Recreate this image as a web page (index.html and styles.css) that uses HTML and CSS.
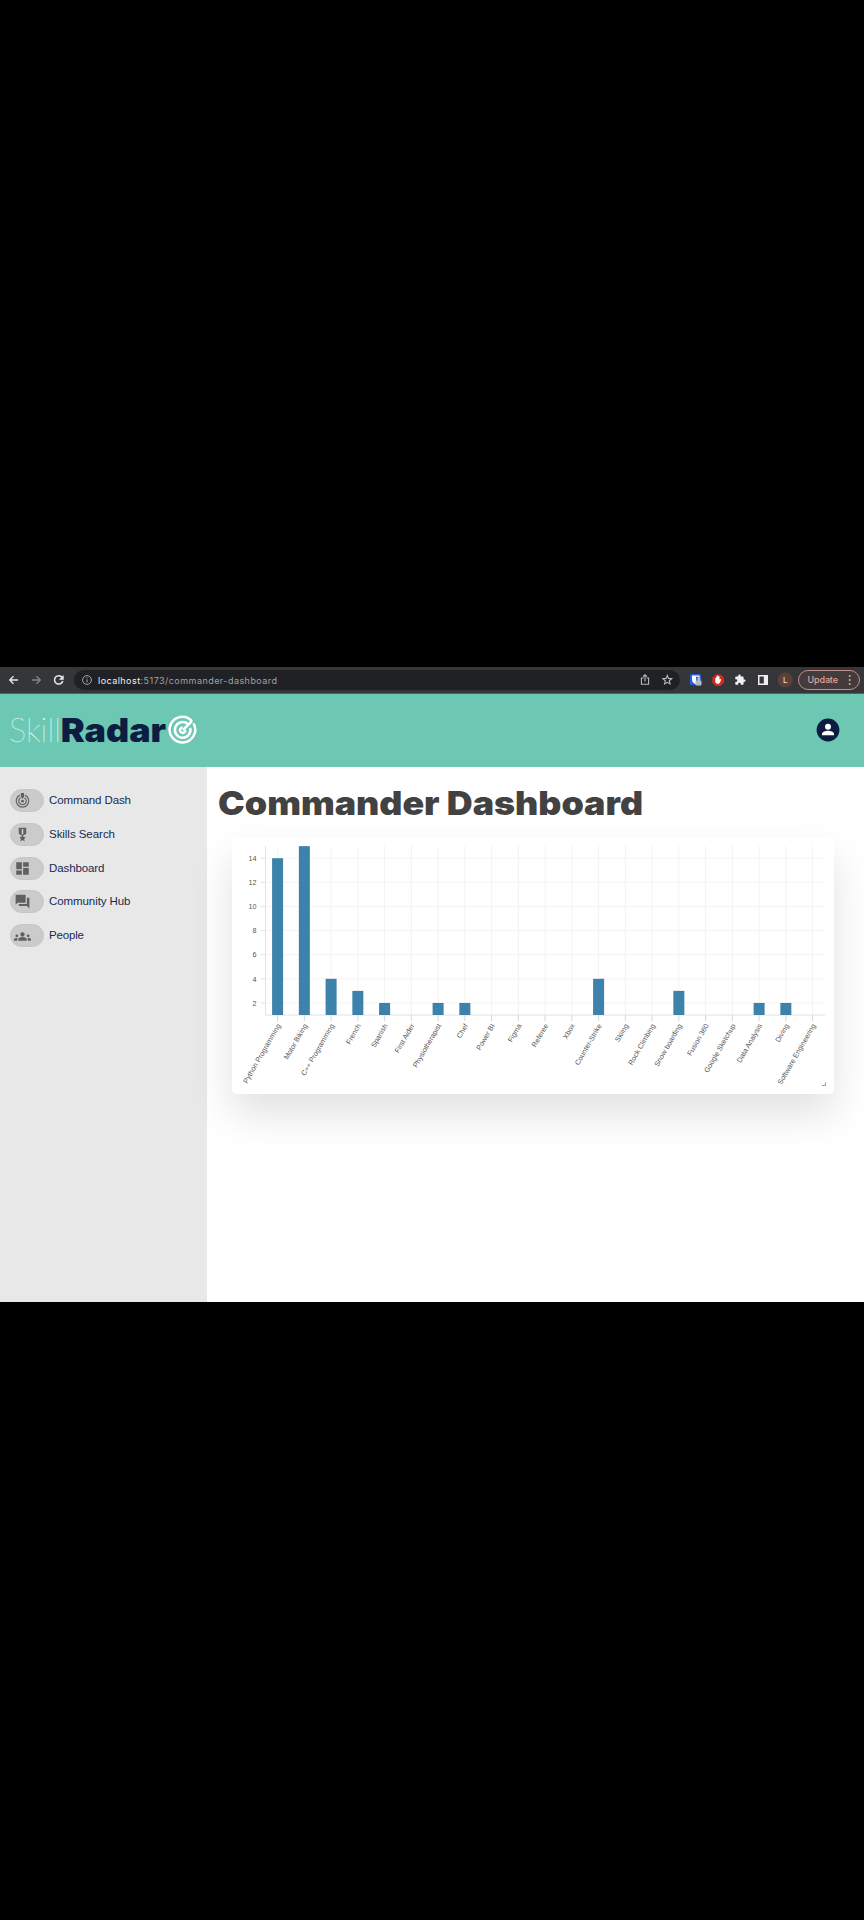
FILE: index.html
```html
<!DOCTYPE html>
<html lang="en">
<head>
<meta charset="utf-8">
<title>Commander Dashboard</title>
<link rel="stylesheet" href="styles.css">
</head>
<body>
<main class="window">
  <div class="toolbar">
    <svg class="nav-icons" width="74" height="26" viewBox="0 0 74 26" fill="none" stroke-width="1.3">
      <path stroke="#e8eaed" d="M18 13H10M13.5 9.2L9.7 13l3.8 3.8"/>
      <path stroke="#85868a" d="M32 13h8M36.5 9.2l3.8 3.8-3.8 3.8"/>
      <path stroke="#e8eaed" stroke-width="1.5" d="M62.2 10.5A4.2 4.2 0 1 0 62.8 14"/>
      <path fill="#e8eaed" d="M63.7 8v4.8h-4.8z"/>
    </svg>
    <div class="address">
      <svg width="10" height="10" viewBox="0 0 10 10" fill="none" stroke="#a5a7aa"><circle cx="5" cy="5" r="4.4"/><path d="M5 4.4v3M5 2.4v1.1"/></svg>
      <svg class="url" width="182" height="18"><text x="0" y="12.5" textLength="179"><tspan class="host">localhost</tspan>:5173/commander-dashboard</text></svg>
      <svg class="address-actions" width="34" height="18" viewBox="0 0 34 18" fill="none" stroke="#b9bbbe" stroke-width="1.1">
        <path d="M4.5 7H2.4v6.2h7.2V7H7.5M6 10.500V4M4 5.700l2-2 2 2"/>
        <path d="M28.300 4.500l1.200 2.900 3.200.3-2.400 2.100.7 3.100-2.700-1.600-2.700 1.600.7-3.100-2.400-2.100 3.200-.3z"/>
      </svg>
    </div>
    <svg class="extensions" width="118" height="26" viewBox="-6 0 118 26">
      <rect x="4" y="7" width="11" height="11" rx="1.300" fill="#2860d0"/>
      <path d="M6 8.500h7.500v4c0 2.500-2 4-3.700 4.700C8 16.300 6 15 6 12.500z" fill="#fff"/><path d="M10 9.700h2.400v2.500c0 1.500-1 2.300-2.400 3z" fill="#2860d0"/>
      <rect x="9.500" y="13.500" width="6" height="5" rx="1" fill="#b8babd"/><path d="M11 13.500v-1a1.500 1.500 0 0 1 3 0v1" fill="none" stroke="#b8babd"/>
      <path d="M29.700 7.400h4.800l3.400 3.400v4.800L34.500 19h-4.800l-3.400-3.400v-4.800z" fill="#d8291f"/>
      <path d="M29.300 12.500v-1.400h1v-1.600h1v-.9h1.100v.9h1.100v3l1-.6.8.6-1.400 3.200-1 1.100h-2.200l-1.400-1.800z" fill="#fff"/>
      <path transform="translate(48.300 7) scale(.49)" fill="#f1f1f2" d="M20.500 11H19V7c0-1.100-.9-2-2-2h-4V3.500a2.500 2.500 0 0 0-5 0V5H4c-1.100 0-2 .9-2 2v3.800h1.500a2.700 2.700 0 0 1 0 5.400H2V20c0 1.100.9 2 2 2h3.800v-1.500a2.700 2.700 0 0 1 5.400 0V22H17c1.100 0 2-.9 2-2v-4h1.500a2.500 2.500 0 0 0 0-5z"/>
      <path fill="#eee" fill-rule="evenodd" d="M72 8h10v10H72zM73.500 9.500v7h4.300v-7z"/>
      <circle cx="99.200" cy="13" r="7.600" fill="#5a4037"/><text x="97" y="16" class="avatar-letter">L</text>
    </svg>
    <div class="update"><svg width="60" height="18"><text x="8.500" y="12.300" textLength="30.500">Update</text><circle cx="50.700" cy="5" r="1"/><circle cx="50.700" cy="9" r="1"/><circle cx="50.700" cy="13" r="1"/></svg></div>
  </div>

  <header class="header">
    <svg width="200" height="50" viewBox="0 0 200 50">
      <text class="brand-light" x="-1" y="36.500" textLength="52" lengthAdjust="spacingAndGlyphs">Skill</text>
      <text class="brand-bold" x="50.700" y="36.500" textLength="105.500" lengthAdjust="spacingAndGlyphs">Radar</text>
      <g fill="none" stroke="#fff" stroke-width="2.500">
        <path d="M182 16.200A12.800 12.800 0 1 0 183.500 18.300"/>
        <path d="M178 19.200A7.800 7.800 0 1 0 180.200 22.900"/>
        <path d="M172.700 22.500A2.700 2.700 0 1 0 175.400 25"/>
        <path d="M173 25l9-9"/>
      </g>
    </svg>
    <svg width="24" height="24" viewBox="0 0 24 24"><circle cx="12" cy="12" r="11.400" fill="#0d1c41"/><circle cx="12" cy="8.700" r="3" fill="#fff"/><path d="M6 17.300v-1.500c0-2 3.500-3.100 6-3.100s6 1.100 6 3.100v1.500z" fill="#fff"/></svg>
  </header>

  <div class="body">
    <nav class="sidebar">
      <a class="item"><span class="pill"><svg viewBox="0 0 24 24"><g fill="none" stroke="#666" stroke-width="2"><path d="M8 3.500A10 10 0 1 0 16 3.500M9 7.500A6 6 0 1 0 15 7.500"/></g><circle cx="12" cy="13" r="2.300"/><path d="M9.500 0h5v6.500L12 9 9.500 6.500z"/></svg></span><svg class="label"><text y="15" textLength="82">Command Dash</text></svg></a>
      <a class="item"><span class="pill"><svg viewBox="0 0 24 24"><path fill-rule="evenodd" d="M18 10.430V1H6v9.430c0 .35.180.68.490.86l4.680 2.510-.99 2.340-3.410.29 2.590 2.240L8.570 23 12 20.730 15.430 23l-.78-4.330 2.590-2.240-3.410-.29-.99-2.340 4.680-2.510c.3-.18.480-.5.480-.86zM13.300 11.500l-1.300.6-1.300-.6V3h2.600z"/></svg></span><svg class="label"><text y="15" textLength="66">Skills Search</text></svg></a>
      <a class="item"><span class="pill"><svg viewBox="0 0 24 24"><path d="M2 13h9V2H2zm0 9h9v-7H2zm11 0h9V11h-9zm0-20v7h9V2z"/></svg></span><svg class="label"><text y="15" textLength="55.500">Dashboard</text></svg></a>
      <a class="item"><span class="pill"><svg viewBox="0 0 24 24"><path d="M22 6h-3v10H6v2c0 .55.45 1 1 1h12l4 4V7c0-.55-.45-1-1-1zm-5 7V2c0-.55-.45-1-1-1H2c-.55 0-1 .45-1 1v15l3-3h12c.55 0 1-.45 1-1z"/></svg></span><svg class="label"><text y="15" textLength="81.500">Community Hub</text></svg></a>
      <a class="item"><span class="pill"><svg class="wide" viewBox="0 0 24 24"><path d="M12 12.750c1.630 0 3.070.39 4.240.9 1.080.48 1.760 1.560 1.760 2.730V18H6v-1.610c0-1.180.68-2.260 1.760-2.730 1.170-.52 2.610-.91 4.240-.91zM4 13c1.100 0 2-.9 2-2s-.9-2-2-2-2 .9-2 2 .9 2 2 2zm1.130 1.100c-.37-.06-.74-.1-1.130-.1-.99 0-1.930.21-2.780.58C.48 14.900 0 15.620 0 16.430V18h4.500v-1.610c0-.83.23-1.610.63-2.290zM20 13c1.100 0 2-.9 2-2s-.9-2-2-2-2 .9-2 2 .9 2 2 2zm4 3.430c0-.81-.48-1.530-1.220-1.850-.85-.37-1.790-.58-2.780-.58-.39 0-.76.04-1.130.1.400.68.63 1.460.63 2.290V18H24zM12 6c1.660 0 3 1.340 3 3s-1.340 3-3 3-3-1.340-3-3 1.340-3 3-3z"/></svg></span><svg class="label"><text y="15" textLength="35">People</text></svg></a>
    </nav>
    <section class="content">
      <h1 class="title"><svg width="440" height="44"><text x="0" y="32.500" textLength="425" lengthAdjust="spacingAndGlyphs">Commander Dashboard</text></svg></h1>
      <div class="card"><svg id="chart" width="602" height="257" viewBox="232 837 602 257"></svg></div>
    </section>
  </div>
</main>
<script src="chart.js"></script>
</body>
</html>
```
FILE: styles.css
```css
* { box-sizing: border-box; }
body { margin: 0; background: #000; min-height: 1920px; padding-top: 667px; font-family: "Liberation Sans", Arial, sans-serif; }
svg { display: block; flex: none; }
.window { width: 864px; height: 634.5px; background: #fff; display: flex; flex-direction: column; overflow: hidden; }
.toolbar { height: 26.500px; flex: none; background: #35363a; border-bottom: 1px solid #4c6561; display: flex; align-items: center; }
.address { width: 606px; height: 20px; border-radius: 10px; background: #202124; display: flex; align-items: center; padding-left: 8px; }
.url { margin-left: 6px; }
.url text { font: 9px Inter, sans-serif; fill: #a0a1a4; }
.url .host { fill: #f1f1f2; }
.address-actions { margin-left: auto; margin-right: 7px; }
.avatar-letter { font: 8px Inter, sans-serif; fill: #eee; }
.update { width: 62px; height: 20.500px; border: 1px solid #c48d87; border-radius: 11px; background: #443b3d; }
.update text { font: 500 9px Inter, sans-serif; fill: #e3a49d; }
.update circle { fill: #e3a49d; }
.header { height: 73.500px; flex: none; background: #6cc7b3; display: flex; align-items: center; justify-content: space-between; padding: 0 24px 0 10px; }
.brand-light { font: 200 34px Lato, sans-serif; fill: #e2fff8; stroke: #d0f3eb; stroke-width: .25px; }
.brand-bold { font: 900 33px Inter, sans-serif; fill: #0d1c41; }
.body { flex: 1; display: flex; }
.sidebar { width: 207px; background: #e8e8e8; padding: 22px 0 0 9.500px; display: flex; flex-direction: column; gap: 10.750px; }
.item { display: flex; height: 23px; gap: 5.500px; }
.pill { width: 34px; height: 23px; border-radius: 12px; background: #cbcbcb; border: 1px solid #c6c6c6; padding: 3px 4px; }
.pill svg { width: 15px; height: 15px; fill: #606060; }
.pill .wide { width: 17px; height: 17px; margin-left: -1px; }
.label { width: 120px; height: 23px; }
.label text { font: 11.500px "Liberation Sans", Arial, sans-serif; fill: #172a50; }
.content { flex: 1; }
.title { margin: 14.500px 0 0 11px; height: 55.500px; }
.title text { font: 900 33px Inter, sans-serif; fill: #424242; }
.card { width: 602px; height: 257px; margin-left: 25px; border-radius: 5px; background: #fff; box-shadow: 0 20px 40px rgba(0,0,0,.12); }
.grid { stroke: #f3f3f3; }
.axis { stroke: #e2e2e2; fill: none; }
.tick { stroke: #d6d6d6; }
.bar { fill: #3c82aa; }
.tick-label { font: 7.200px "Liberation Sans", Arial, sans-serif; fill: #555; text-anchor: end; }
.corner { stroke: #999; fill: none; }
```
FILE: chart.js
```js
const data = [["Python Programming",14],["Motor Biking",15],["C++ Programming",4],["French",3],["Spanish",2],["First Aider",1],["Physiotherapist",2],["Chef",2],["Power BI",1],["Figma",1],["Referee",1],["Xbox",1],["Counter-Strike",4],["Skiing",1],["Rock Climbing",1],["Snow boarding",3],["Fusion 360",1],["Google Sketchup",1],["Data Analysis",2],["Diving",2],["Software Engineering",1]];
const base = 1015, unit = 12.06, left = 277.6, step = 26.75;
const yAt = v => base - (v - 1) * unit;
let out = "";
for (let v = 2; v <= 14; v += 2) {
  out += `<path class="grid" d="M265.500 ${yAt(v)}H825"/><path class="axis" d="M260.500 ${yAt(v)}h5"/><text class="tick-label" x="256.500" y="${yAt(v) + 2.700}">${v}</text>`;
}
data.forEach((d, i) => {
  const x = left + i * step;
  out += `<path class="grid" d="M${x} 846V1015"/><path class="tick" d="M${x} 1015v6"/>`;
});
out += `<path class="axis" d="M265.500 846v169H825"/>`;
data.forEach(([name, v], i) => {
  const x = left + i * step;
  if (v > 1) out += `<rect class="bar" x="${x - 5.500}" y="${yAt(v)}" width="11" height="${base - yAt(v)}"/>`;
  out += `<text class="tick-label" transform="translate(${x + 3.300} 1025.500) rotate(-60)">${name}</text>`;
});
out += `<path class="corner" d="M822 1085.500h3.500v-3"/>`;
document.getElementById("chart").innerHTML = out;
```
